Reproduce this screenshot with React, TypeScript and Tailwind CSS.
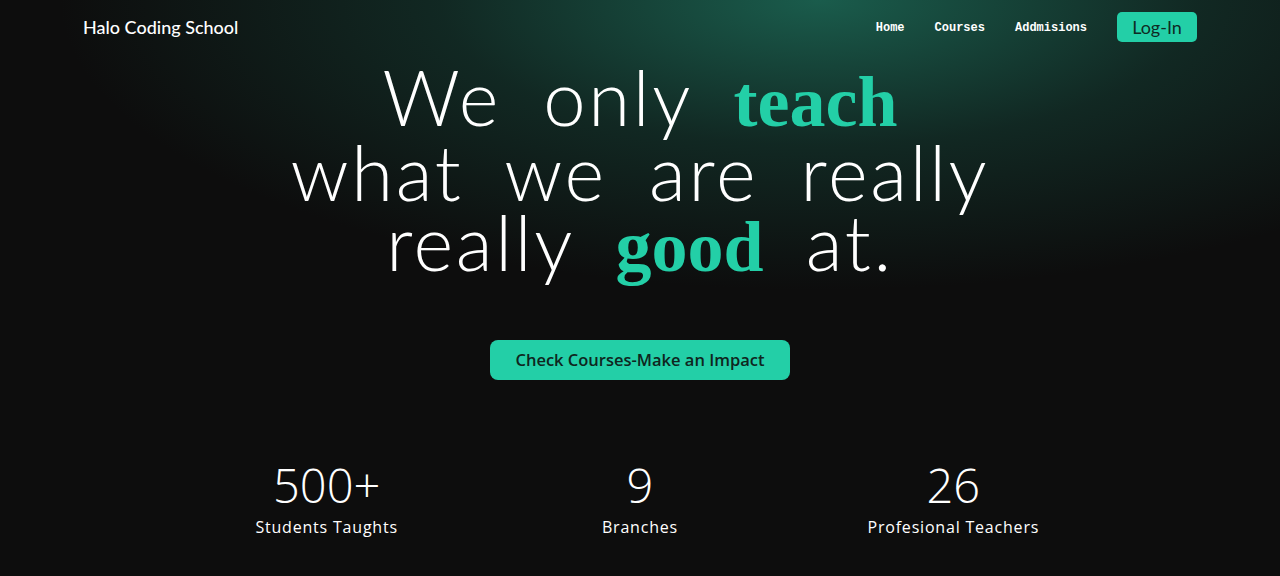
const stats = [
  { value: '500+', label: 'Students Taughts' },
  { value: '9', label: 'Branches' },
  { value: '26', label: 'Profesional Teachers' },
]

const links = ['Home', 'Courses', 'Addmisions']

export default function App() {
  return (
    <div
      className="relative w-full h-[576px] overflow-hidden bg-[#0d0d0d] text-white"
      style={{
        background:
          'radial-gradient(ellipse 760px 290px at 820px 0px, rgba(26,92,76,1), rgba(20,58,49,.6) 50%, rgba(13,13,13,0) 100%), #0d0d0d',
      }}
    >
      <nav className="flex items-center justify-between px-[83px] h-[54px]">
        <div className="text-[18px] font-['Lato',sans-serif] font-medium">Halo Coding School</div>
        <div className="flex items-center">
          {links.map((l) => (
            <a key={l} className="font-['Liberation_Mono',monospace] font-bold text-[12px] mr-[30px] mt-[2px]">
              {l}
            </a>
          ))}
          <button className="bg-[#23cfa7] text-[#0e2b24] rounded-[5px] w-[80px] h-[30px] text-[18px] font-['Lato',sans-serif] leading-none -mt-[1px]">
            Log-In
          </button>
        </div>
      </nav>

      <h1 className="mt-[8px] text-center font-['Lato',sans-serif] font-light text-[76px] leading-[70px] tracking-[0.035em] [word-spacing:0.25em]">
        We only{' '}
        <span className="font-['Liberation_Serif',serif] font-bold text-[#23cfa7] text-[72px] tracking-normal">teach</span>
        <br />
        what we are really
        <br />
        really{' '}
        <span className="font-['Liberation_Serif',serif] font-bold text-[#23cfa7] text-[72px] tracking-normal">good</span>{' '}
        at.
      </h1>

      <div className="flex justify-center mt-[58px]">
        <button className="w-[300px] h-[40px] rounded-[8px] bg-[#23cfa7] text-[#0f2620] text-[16.5px] font-semibold font-['Open_Sans',sans-serif]">
          Check Courses-Make an Impact
        </button>
      </div>

      <div className="grid grid-cols-3 mt-[79px] px-[170px]">
        {stats.map((s) => (
          <div key={s.label} className="flex flex-col items-center">
            <div className="font-['Open_Sans',sans-serif] font-light text-[47px] leading-[52px]">{s.value}</div>
            <div className="font-['Open_Sans',sans-serif] text-[16px] tracking-[0.05em] mt-[4px]">{s.label}</div>
          </div>
        ))}
      </div>
    </div>
  )
}
